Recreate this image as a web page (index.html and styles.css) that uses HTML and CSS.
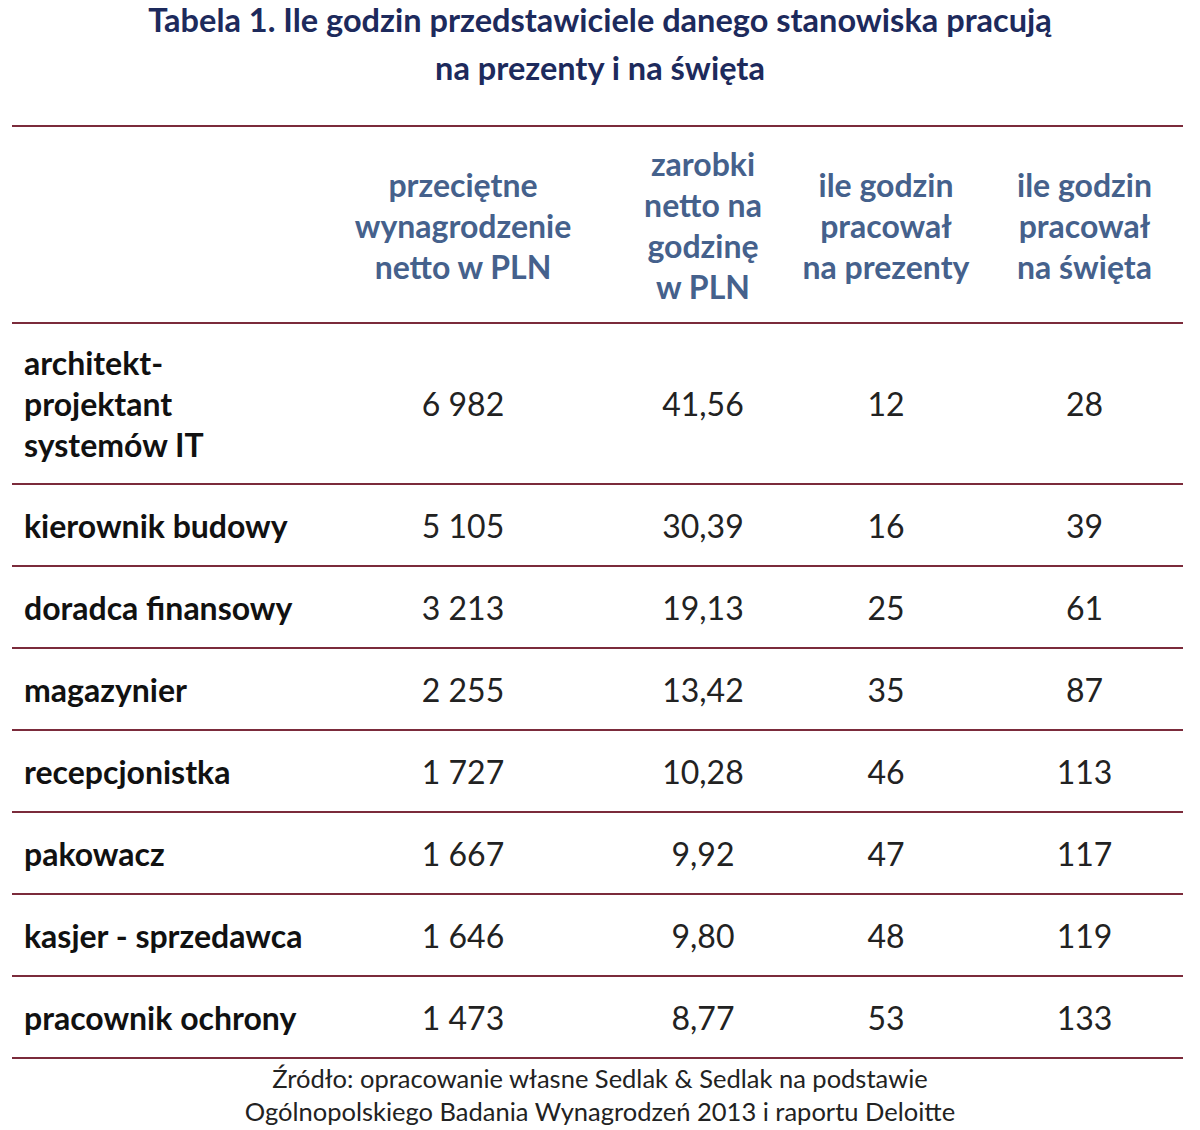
FILE: index.html
```html
<!DOCTYPE html>
<html lang="pl">
<head>
<meta charset="utf-8">
<title>Tabela 1</title>
<link rel="stylesheet" href="styles.css">
</head>
<body>
<div class="page">
  <h1 class="title"><span class="title-line">Tabela 1. Ile godzin przedstawiciele danego stanowiska pracują</span><span class="title-line">na prezenty i na święta</span></h1>
  <table class="data">
    <colgroup>
      <col class="c-name">
      <col class="c-pay">
      <col class="c-hour">
      <col class="c-gift">
      <col class="c-xmas">
    </colgroup>
    <thead>
      <tr>
        <th class="blank"></th>
        <th>przeciętne<br>wynagrodzenie<br>netto w PLN</th>
        <th>zarobki<br>netto na<br>godzinę<br>w PLN</th>
        <th>ile godzin<br>pracował<br>na prezenty</th>
        <th>ile godzin<br>pracował<br>na święta</th>
      </tr>
    </thead>
    <tbody>
      <tr class="tall">
        <td class="name">architekt-<br>projektant<br>systemów IT</td>
        <td>6 982</td><td>41,56</td><td>12</td><td>28</td>
      </tr>
      <tr>
        <td class="name">kierownik budowy</td>
        <td>5 105</td><td>30,39</td><td>16</td><td>39</td>
      </tr>
      <tr>
        <td class="name">doradca finansowy</td>
        <td>3 213</td><td>19,13</td><td>25</td><td>61</td>
      </tr>
      <tr>
        <td class="name">magazynier</td>
        <td>2 255</td><td>13,42</td><td>35</td><td>87</td>
      </tr>
      <tr>
        <td class="name">recepcjonistka</td>
        <td>1 727</td><td>10,28</td><td>46</td><td>113</td>
      </tr>
      <tr>
        <td class="name">pakowacz</td>
        <td>1 667</td><td>9,92</td><td>47</td><td>117</td>
      </tr>
      <tr>
        <td class="name">kasjer - sprzedawca</td>
        <td>1 646</td><td>9,80</td><td>48</td><td>119</td>
      </tr>
      <tr>
        <td class="name">pracownik ochrony</td>
        <td>1 473</td><td>8,77</td><td>53</td><td>133</td>
      </tr>
    </tbody>
  </table>
  <p class="source">Źródło: opracowanie własne Sedlak &amp; Sedlak na podstawie<br>Ogólnopolskiego Badania Wynagrodzeń 2013 i raportu Deloitte</p>
</div>
</body>
</html>
```

FILE: styles.css
```css
html, body {
  margin: 0;
  padding: 0;
  background: #ffffff;
}

body {
  font-family: Lato, "Open Sans", "Liberation Sans", sans-serif;
  color: #1a1a1a;
}

.page {
  width: 1200px;
  display: flex;
  flex-direction: column;
}

.title {
  margin: 0 0 38px;
  display: flex;
  flex-direction: column;
  align-items: center;
  gap: 9px;
  font-size: 32.5px;
  line-height: 39px;
  font-weight: 700;
  color: #1d2a5c;
  text-align: center;
}

.title-line {
  display: block;
}

.data {
  width: 1171px;
  margin-left: 12px;
  border-collapse: separate;
  border-spacing: 0;
  table-layout: fixed;
  font-size: 32px;
  line-height: 41px;
}

.c-name { width: 294px; }
.c-pay { width: 314px; }
.c-hour { width: 166px; }
.c-gift { width: 200px; }
.c-xmas { width: 197px; }

.data th {
  border-top: 2px solid #7b2b3b;
  border-bottom: 2px solid #7b2b3b;
  padding: 16px 0 15px;
  font-weight: 700;
  color: #45618c;
  text-align: center;
  vertical-align: middle;
}

.data td {
  border-bottom: 2px solid #7b2b3b;
  padding: 20px 0 19px;
  text-align: center;
  vertical-align: middle;
  color: #222222;
  font-weight: 400;
}

.data tr.tall td {
  padding-top: 18px;
  padding-bottom: 18px;
}

.data td.name {
  text-align: left;
  padding-left: 12px;
  font-weight: 700;
  color: #111111;
  white-space: nowrap;
}

.source {
  margin: 3px 0 0;
  font-size: 25.5px;
  line-height: 33px;
  text-align: center;
  color: #222222;
}
```
